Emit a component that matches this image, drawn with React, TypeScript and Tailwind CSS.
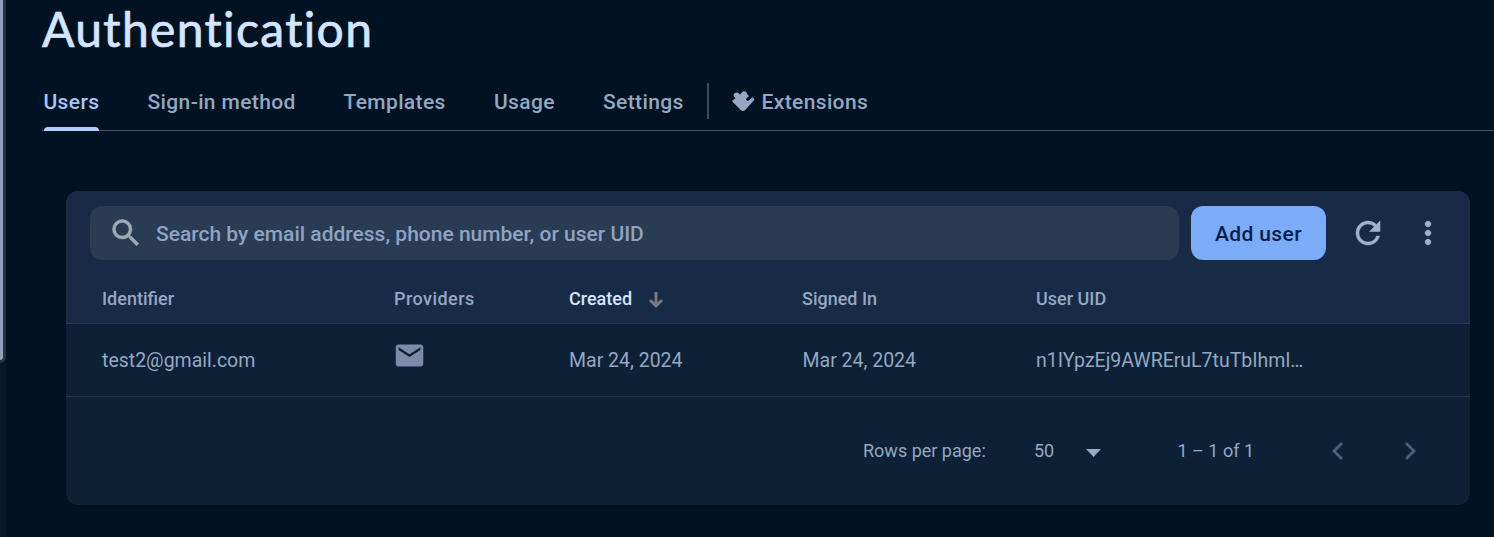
import { MdSearch, MdRefresh, MdMoreVert, MdEmail } from "react-icons/md";

const tabs = [
  { label: "Sign-in method", box: "ml-[48.5px] w-[148px]" },
  { label: "Templates", box: "ml-[48px] w-[102px]" },
  { label: "Usage", box: "ml-[48.5px] w-[61px]" },
  { label: "Settings", box: "ml-12 w-[81px]" },
];

const columns = "grid grid-cols-[292px_175px_233px_234px_1fr] pl-9";

function Tabs() {
  return (
    <nav className="ml-[42px] flex h-[60px] border-b border-[#465669] pl-[1.5px] text-[21px] font-medium tracking-[0.37px] text-[#95a7c2]">
      <div className="-mb-px flex w-[55.5px] flex-col justify-between text-[#a8c7fa]">
        <span className="mt-[15px] whitespace-nowrap leading-[32px]">Users</span>
        <span className="h-1 rounded-t-[4px] bg-[#b3cdfb]" />
      </div>
      {tabs.map((t) => (
        <span key={t.label} className={`mt-[15px] whitespace-nowrap leading-[32px] ${t.box}`}>
          {t.label}
        </span>
      ))}
      <span className="ml-[23px] mt-3 h-9 w-[2px] bg-[#3a4b5f]" />
      <svg viewBox="0 0 23 21" className="ml-[23px] mt-5 h-[21px] w-[23px] fill-current">
        <path d="M.6 9.2 3.4 7.4 1.8 5.2Q1 2.2 4 1.4L6 1.8 8.2 3.4 10.1 1Q12.6-.8 14.8 1.4L15 3 17 5 14.8 7Q13.4 8.8 14.8 9.6 16 10.2 17.4 9L19.6 6.7Q20.4 6.1 21.2 6.8L22 7.7Q22.6 8.6 21.8 9.5L13.3 18.9Q11 21 8.7 18.9L.6 10.8Q0 10 .6 9.2z" />
      </svg>
      <span className="ml-[6.5px] mt-[15px] leading-[32px]">Extensions</span>
    </nav>
  );
}

function Toolbar() {
  return (
    <div className="flex h-[84px] items-center pl-6 pr-6">
      <div className="flex h-[54px] w-[1089px] items-center rounded-xl bg-[#293c54] pl-[18px]">
        <MdSearch className="size-9 text-[#a1a9b2] [&>path:last-child]:stroke-current [&>path:last-child]:[stroke-width:0.35]" />
        <span className="ml-3 pt-[3px] text-[21px] font-medium text-[#8fa3c3]">
          Search by email address, phone number, or user UID
        </span>
      </div>
      <button className="ml-3 h-[54px] w-[135px] rounded-xl bg-[#7cacf8] pt-[3px] text-[21px] font-medium tracking-[0.37px] text-[#041e49]">
        Add user
      </button>
      <MdRefresh className="ml-6 size-9 text-[#a0b2ce] [&>path:last-child]:stroke-current [&>path:last-child]:[stroke-width:0.35]" />
      <MdMoreVert className="ml-6 size-9 text-[#a0b2ce] [&>path:last-child]:stroke-current [&>path:last-child]:[stroke-width:0.25]" />
    </div>
  );
}

export default function App() {
  return (
    <div className="flex h-[537px] w-[1494px] overflow-hidden bg-[#011323] font-['Roboto',sans-serif]">
      <aside className="w-1.5 bg-[#05192a]">
        <div className="h-[363px] rounded-br-[6px] bg-[#27313f]">
          <div className="h-[360px] w-[3px] rounded-br-[3px] bg-[#8fa2bd]" />
        </div>
      </aside>
      <main className="-ml-1.5 flex-1">
        <h1 className="h-[71px] pl-[42px] font-['Lato',sans-serif] text-[48px] font-normal leading-[57px] tracking-[1.35px] text-[#d6e5ff] [-webkit-text-stroke:0.7px_#d6e5ff] [font-variant-ligatures:none]">
          Authentication
        </h1>
        <Tabs />
        <section className="ml-[66px] mt-[60px] h-[314px] w-[1404px] overflow-hidden rounded-xl bg-[#0c2136] shadow-[0_1px_3px_rgba(0,0,0,0.4)]">
          <header className="h-[133px] border-b border-[#263b56] bg-[#172b46]">
            <Toolbar />
            <div className={`${columns} pt-[11px] text-[18px] font-medium leading-[26px] text-[#95a7c2]`}>
              <span>Identifier</span>
              <span className="tracking-[0.45px]">Providers</span>
              <span className="flex items-center text-[#d6e5ff]">
                Created
                <svg viewBox="0 0 14 16" className="ml-[17px] mt-[2px] h-4 w-3.5" fill="none" stroke="#797b80" strokeWidth="2.8">
                  <path d="M7 0v14M1 8l6 6 6-6" />
                </svg>
              </span>
              <span>Signed In</span>
              <span>User UID</span>
            </div>
          </header>
          <div className={`${columns} h-[73px] border-b border-[#213349] text-[19.5px] leading-[74px] text-[#95a7c2]`}>
            <span>test2@gmail.com</span>
            <span>
              <MdEmail className="-ml-[1.5px] mt-[14.5px] size-[33px] text-[#7a8ca8]" />
            </span>
            <span>Mar 24, 2024</span>
            <span className="pl-[0.5px]">Mar 24, 2024</span>
            <span>n1IYpzEj9AWREruL7tuTbIhml…</span>
          </div>
          <footer className="flex h-[108px] items-center pl-[797px] text-[18px] text-[#95a7c2]">
            <span className="w-[171px] pb-0.5">Rows per page:</span>
            <span className="w-[51.5px] pb-0.5">50</span>
            <svg viewBox="0 0 15 8" className="mt-1 h-2 w-[15px] fill-current">
              <path d="M0 0h15L7.5 8z" />
            </svg>
            <span className="ml-[77px] w-[154.5px] pb-0.5">1 – 1 of 1</span>
            <svg viewBox="0 0 11 18" className="h-[18px] w-[11px]" fill="none" stroke="#4c5e75" strokeWidth="2.8">
              <path d="M10 1L2 9l8 8" />
            </svg>
            <svg viewBox="0 0 11 18" className="ml-[62px] h-[18px] w-[11px]" fill="none" stroke="#4c5e75" strokeWidth="2.8">
              <path d="M1 1l8 8-8 8" />
            </svg>
          </footer>
        </section>
      </main>
    </div>
  );
}
